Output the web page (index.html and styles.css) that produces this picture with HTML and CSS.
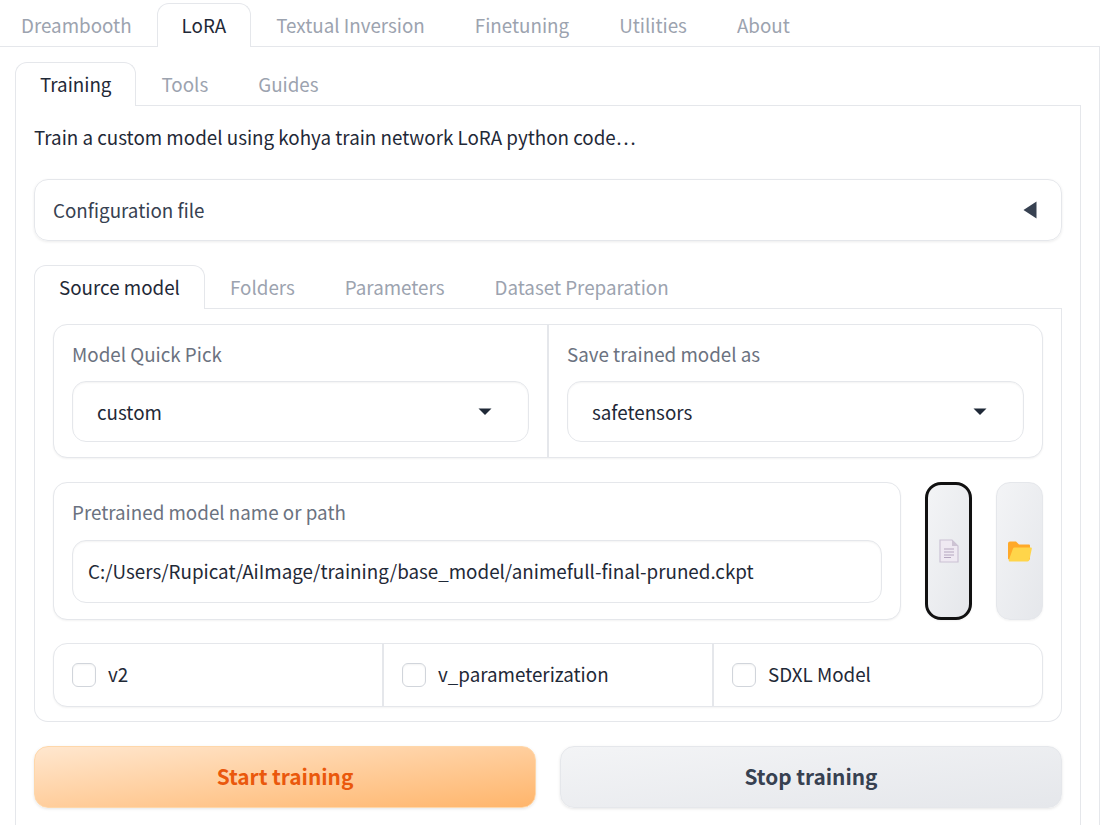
FILE: index.html
```html
<!DOCTYPE html>
<html lang="en">
<head>
<meta charset="utf-8">
<title>LoRA</title>
<link rel="stylesheet" href="styles.css">
</head>
<body>
<div class="app">
  <div class="tabs tabs-top">
    <button class="tab">Dreambooth</button>
    <button class="tab active">LoRA</button>
    <button class="tab">Textual Inversion</button>
    <button class="tab">Finetuning</button>
    <button class="tab">Utilities</button>
    <button class="tab">About</button>
  </div>
  <div class="outer-panel">
    <div class="tabs">
      <button class="tab active">Training</button>
      <button class="tab">Tools</button>
      <button class="tab">Guides</button>
    </div>
    <div class="training-panel">
      <p class="intro">Train a custom model using kohya train network LoRA python code…</p>
      <div class="accordion">
        <span>Configuration file</span>
        <svg class="caret-left" width="14" height="18" viewBox="0 0 14 18"><path d="M13.500 0.500V17.500L0.500 9Z" fill="#374151"/></svg>
      </div>
      <div class="tabs">
        <button class="tab active">Source model</button>
        <button class="tab">Folders</button>
        <button class="tab">Parameters</button>
        <button class="tab">Dataset Preparation</button>
      </div>
      <div class="source-panel">
        <div class="block split-row">
          <div class="field">
            <label class="label">Model Quick Pick</label>
            <div class="input select"><span>custom</span><svg width="14" height="7" viewBox="0 0 14 7"><path d="M0.500 0.500H13.500L7 7Z" fill="#1f2937"/></svg></div>
          </div>
          <div class="field">
            <label class="label">Save trained model as</label>
            <div class="input select"><span>safetensors</span><svg width="14" height="7" viewBox="0 0 14 7"><path d="M0.500 0.500H13.500L7 7Z" fill="#1f2937"/></svg></div>
          </div>
        </div>
        <div class="path-row">
          <div class="block field path-field">
            <label class="label">Pretrained model name or path</label>
            <div class="input path-input">C:/Users/Rupicat/AiImage/training/base_model/animefull-final-pruned.ckpt</div>
          </div>
          <button class="icon-btn focused" aria-label="file">
            <svg width="20" height="24" viewBox="0 0 20 24"><path d="M1 1H13L19 7V23H1Z" fill="#efe9f2" stroke="#cbc2d4" stroke-width="1.200"/><path d="M13 1L19 7H13Z" fill="#cdc3d3"/><path d="M5 10H15M5 13H15M5 16H15M5 18.500H12" stroke="#b5a6bf" stroke-width="1"/></svg>
          </button>
          <button class="icon-btn" aria-label="folder">
            <svg width="24" height="21" viewBox="0 0 24 20"><path d="M0 2Q0 0 2 0H8L11 3H21Q22 3 22 4V18H1Q0 18 0 17Z" fill="#ffa929"/><path d="M5 7Q5.300 6 6.500 6H23Q24 6 23.800 7.200L21.500 18Q21.200 20 19.500 20H1.500Q0.300 20 1 18Z" fill="#ffd54a"/></svg>
          </button>
        </div>
        <div class="block check-row">
          <label class="check"><span class="box"></span><span class="check-text">v2</span></label>
          <label class="check"><span class="box"></span><span class="check-text">v_parameterization</span></label>
          <label class="check"><span class="box"></span><span class="check-text">SDXL Model</span></label>
        </div>
      </div>
      <div class="actions">
        <button class="action primary">Start training</button>
        <button class="action secondary">Stop training</button>
      </div>
    </div>
  </div>
</div>
</body>
</html>
```
FILE: styles.css
```css
* { box-sizing: border-box; }
html, body { margin: 0; height: 825px; overflow: hidden; background: #fff; }
body { font-family: "Noto Sans CJK SC", "Source Sans Pro", "Noto Sans", sans-serif; font-size: 18.8px; color: #1f2937; }
button { font: inherit; }

.app { width: 1100px; height: 825px; overflow: hidden; }

.tabs { display: flex; align-items: flex-end; height: 44px; border-bottom: 1px solid #e5e7eb; }
.tabs-top { height: 47px; margin-left: -4px; }
.tab { height: 44px; padding: 0 24px 1px; border: 1px solid transparent; border-bottom: 0; background: none; color: #9ca3af; line-height: 40px; white-space: nowrap; border-radius: 12px 12px 0 0; margin-bottom: -1px; }
.tab.active { background: #fff; color: #1f2937; border-color: #e5e7eb; }

.outer-panel { border-right: 1px solid #e5e7eb; height: 778px; padding: 15px 18px 0 15px; }
.training-panel { border: 1px solid #e5e7eb; border-top: 0; height: 800px; padding: 0 18px; }
.intro { margin: 0; height: 73px; padding-top: 17px; line-height: 28px; }

.accordion { display: flex; justify-content: space-between; align-items: center; height: 62px; padding: 0 24px 1px 18px; border: 1px solid #e5e7eb; border-radius: 14px; box-shadow: 0 1px 3px rgba(0,0,0,.08); margin-bottom: 24px; color: #374151; }
.accordion span { margin-top: -1px; }

.source-panel { display: flex; flex-direction: column; border: 1px solid #e5e7eb; border-top: 0; border-radius: 0 0 14px 14px; height: 413px; padding: 15px 18px 0; }

.block { border: 1px solid #e5e7eb; border-radius: 14px; box-shadow: 0 1px 2px rgba(0,0,0,.05); background: #fff; }
.split-row { display: grid; grid-template-columns: 493px 1fr; height: 134px; overflow: hidden; }
.split-row .field + .field { border-left: 2px solid #e5e7eb; }
.field { padding: 17px 18px 0; }
.label { display: block; color: #6b7280; line-height: 24px; padding-bottom: 2px; margin-bottom: 13px; }
.input { height: 61px; border: 1px solid #e5e7eb; border-radius: 14px; box-shadow: inset 0 1px 2px rgba(0,0,0,.05); display: flex; align-items: center; }
.select { justify-content: space-between; padding: 0 36px 0 24px; }
.select span { margin-top: -1px; }

.path-row { display: flex; margin-top: 24px; height: 138px; }
.path-field { width: 848px; }
.path-field .label { margin-bottom: 14px; }
.path-input { padding: 0 15px 3px; height: 63px; white-space: nowrap; }
.icon-btn { width: 47px; height: 138px; margin-left: 24px; padding: 0; border: 1px solid #e5e7eb; border-radius: 14px; background: linear-gradient(to bottom right, #f3f4f6, #e5e7eb); box-shadow: 0 1px 2px rgba(0,0,0,.05); display: flex; align-items: center; justify-content: center; }
.focused { border: 3px solid #111; border-radius: 16px; }

.check-row { display: grid; grid-template-columns: 328px 330px 1fr; margin-top: 23px; height: 64px; overflow: hidden; }
.check { display: flex; align-items: center; gap: 12px; padding-left: 18px; }
.check + .check { border-left: 2px solid #e5e7eb; }
.check-text { margin-top: -3px; }
.box { width: 24px; height: 24px; border: 1px solid #d1d5db; border-radius: 6px; background: #fff; box-shadow: inset 0 1px 2px rgba(0,0,0,.05); }

.actions { display: grid; grid-template-columns: 1fr 1fr; gap: 24px; margin-top: 24px; }
.action { height: 62px; padding-bottom: 3px; border-radius: 14px; font-size: 20.8px; font-weight: 600; box-shadow: 0 1px 3px rgba(0,0,0,.1); }
.primary { color: #ea580c; border: 1px solid #fed7aa; background: linear-gradient(to bottom right, #ffe7cf, #ffb56b); }
.secondary { color: #374151; border: 1px solid #e5e7eb; background: linear-gradient(to bottom right, #f3f4f6, #e5e7eb); }
```
